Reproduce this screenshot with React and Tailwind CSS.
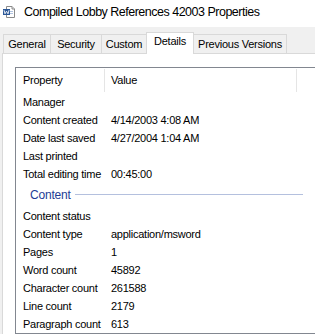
import React from "react";

const rows1 = [
  ["Manager", ""],
  ["Content created", "4/14/2003 4:08 AM"],
  ["Date last saved", "4/27/2004 1:04 AM"],
  ["Last printed", ""],
  ["Total editing time", "00:45:00"],
];

const rows2 = [
  ["Content status", ""],
  ["Content type", "application/msword"],
  ["Pages", "1"],
  ["Word count", "45892"],
  ["Character count", "261588"],
  ["Line count", "2179"],
  ["Paragraph count", "613"],
];

function Row({ label, value }) {
  return (
    <div className="flex h-[18px] items-center">
      <div className="w-[89px] shrink-0 pl-[7px] whitespace-nowrap">{label}</div>
      <div className="pl-[6px] whitespace-nowrap">{value}</div>
    </div>
  );
}

function WordIcon() {
  return (
    <svg width="12" height="12" viewBox="0 0 12 12" className="shrink-0">
      <path d="M3.5 0.5 H9 L11.5 3 V11.5 H3.5 Z" fill="#ffffff" stroke="#8a8a8a" />
      <path d="M9 0.5 V3 H11.5" fill="#e6e6e6" stroke="#8a8a8a" />
      <rect x="5" y="5" width="5" height="0.8" fill="#9db4d8" />
      <rect x="5" y="7" width="5" height="0.8" fill="#9db4d8" />
      <rect x="0" y="3" width="7" height="6" fill="#2b5797" />
      <path d="M1 4.2 L2 7.8 L3.5 5.2 L5 7.8 L6 4.2" fill="none" stroke="#ffffff" strokeWidth="0.9" />
    </svg>
  );
}

function Tab({ children, w, selected, first }) {
  if (selected) {
    return (
      <div
        className={`relative z-10 -ml-px mb-[-1px] flex h-[22px] ${w} items-start justify-center border border-b-0 border-[#d9d9d9] bg-white pt-[3px]`}
      >
        {children}
      </div>
    );
  }
  return (
    <div
      className={`${first ? "" : "-ml-px"} flex h-[19px] ${w} items-center justify-center border border-b-0 border-[#d9d9d9] bg-[#f0f0f0] pt-[1px]`}
    >
      {children}
    </div>
  );
}

export default function App() {
  return (
    <div className="h-[334px] w-[315px] overflow-hidden bg-[#f0f0f0] font-['Liberation_Sans',Arial,sans-serif] text-[11px] leading-none tracking-[-0.25px] text-black">
      <div className="flex h-[27px] items-center bg-white pl-[3px] pb-[3px]">
        <WordIcon />
        <div className="ml-[9px] whitespace-nowrap text-[12.5px] tracking-[-0.5px] text-black">
          Compiled Lobby References 42003 Properties
        </div>
      </div>
      <div className="flex h-[26px] items-end pl-[3px]">
        <Tab w="w-[48px]" first>General</Tab>
        <Tab w="w-[52px]">Security</Tab>
        <Tab w="w-[46px]">Custom</Tab>
        <Tab w="w-[48px]" selected>Details</Tab>
        <Tab w="w-[94px]">Previous Versions</Tab>
      </div>
      <div className="ml-[2px] h-[300px] w-[340px] border border-[#d9d9d9] bg-white pl-[12px] pt-[13px]">
        <div className="w-[330px] border border-[#828790] bg-white">
          <div className="relative flex h-[25px] items-center">
            <div className="w-[89px] shrink-0 pl-[7px]">Property</div>
            <div className="pl-[6px]">Value</div>
            <div className="absolute left-[88px] top-px h-[23px] w-px bg-[#e5e5e5]" />
            <div className="absolute left-[280px] top-px h-[23px] w-px bg-[#e5e5e5]" />
          </div>
          {rows1.map(([l, v]) => (
            <Row key={l} label={l} value={v} />
          ))}
          <div className="flex h-[24px] items-center pl-[14px] pr-[41px] pb-px">
            <span className="text-[12px] tracking-[-0.2px] text-[#1e3c96]">Content</span>
            <div className="ml-[4px] h-px flex-1 bg-[#b4c0de]" />
          </div>
          {rows2.map(([l, v]) => (
            <Row key={l} label={l} value={v} />
          ))}
        </div>
      </div>
    </div>
  );
}
